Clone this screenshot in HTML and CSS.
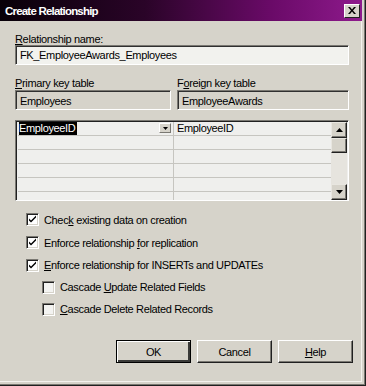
FILE: index.html
```html
<!DOCTYPE html>
<html lang="en">

<head>
    <meta charset="UTF-8">
    <title>Create Relationship</title>
    <link rel="stylesheet" href="styles.css">
</head>

<body>
    <div class="window">
        <div class="titlebar">
            <span class="title">Create Relationship</span>
            <span class="close-btn">
                <svg width="8" height="7" viewBox="0 0 8 7"><path d="M0 0h2l2 2.5 2-2.5h2L5 3.5 8 7H6L4 4.5 2 7H0l3-3.5z" fill="#000"/></svg>
            </span>
        </div>

        <div class="content">
            <label class="field-label"><u>R</u>elationship name:</label>
            <div class="textbox name-box">FK_EmployeeAwards_Employees</div>

            <div class="key-tables">
                <div class="key-col left-col">
                    <label class="field-label"><u>P</u>rimary key table</label>
                    <div class="textbox readonly">Employees</div>
                </div>
                <div class="key-col right-col">
                    <label class="field-label">F<u>o</u>reign key table</label>
                    <div class="textbox readonly">EmployeeAwards</div>
                </div>
            </div>

            <div class="grid">
                <div class="grid-rows">
                    <div class="grid-row">
                        <div class="cell cell-left"><span class="selected">EmployeeID</span><span class="drop-btn"><svg width="5" height="3" viewBox="0 0 5 3"><path d="M0 0h5L2.5 3z" fill="#000"/></svg></span></div>
                        <div class="cell">EmployeeID</div>
                    </div>
                    <div class="grid-row"><div class="cell cell-left"></div><div class="cell"></div></div>
                    <div class="grid-row"><div class="cell cell-left"></div><div class="cell"></div></div>
                    <div class="grid-row"><div class="cell cell-left"></div><div class="cell"></div></div>
                    <div class="grid-row"><div class="cell cell-left"></div><div class="cell"></div></div>
                    <div class="grid-row"><div class="cell cell-left"></div><div class="cell"></div></div>
                </div>
                <div class="scrollbar">
                    <span class="sb-btn"><svg width="7" height="4" viewBox="0 0 7 4"><path d="M3.5 0L7 4H0z" fill="#000"/></svg></span>
                    <span class="sb-btn sb-thumb"></span>
                    <span class="sb-track"></span>
                    <span class="sb-btn"><svg width="7" height="4" viewBox="0 0 7 4"><path d="M0 0h7L3.5 4z" fill="#000"/></svg></span>
                </div>
            </div>

            <div class="options">
                <div class="option">
                    <span class="checkbox"><svg width="9" height="9" viewBox="0 0 9 9"><path d="M1 3.5l2 2 5-5v2l-5 5-2-2z" fill="#000"/></svg></span>
                    <span>Chec<u>k</u> existing data on creation</span>
                </div>
                <div class="option">
                    <span class="checkbox"><svg width="9" height="9" viewBox="0 0 9 9"><path d="M1 3.5l2 2 5-5v2l-5 5-2-2z" fill="#000"/></svg></span>
                    <span>Enforce relationship <u>f</u>or replication</span>
                </div>
                <div class="option">
                    <span class="checkbox"><svg width="9" height="9" viewBox="0 0 9 9"><path d="M1 3.5l2 2 5-5v2l-5 5-2-2z" fill="#000"/></svg></span>
                    <span><u>E</u>nforce relationship for INSERTs and UPDATEs</span>
                </div>
                <div class="option sub-option">
                    <span class="checkbox empty"></span>
                    <span>Cascade <u>U</u>pdate Related Fields</span>
                </div>
                <div class="option sub-option">
                    <span class="checkbox empty"></span>
                    <span><u>C</u>ascade Delete Related Records</span>
                </div>
            </div>

            <div class="buttons">
                <button class="btn default">OK</button>
                <button class="btn">Cancel</button>
                <button class="btn"><u>H</u>elp</button>
            </div>
        </div>
    </div>
</body>

</html>
```

FILE: styles.css
```css
body {
    margin: 0;
    font-family: "Liberation Sans", Arial, sans-serif;
    font-size: 11px;
    letter-spacing: -0.35px;
    color: #000;
    background: #d6d3ca;
}

.window {
    width: 366px;
    height: 386px;
    box-sizing: border-box;
    background: #d6d3ca;
    border-right: 1px solid #202020;
    border-bottom: 1px solid #202020;
    box-shadow: inset -1px -1px 0 #7a7872, inset -3px -3px 0 #d6d3ca, inset -4px -4px 0 #f4f2ee;
    display: flex;
    flex-direction: column;
}

.titlebar {
    height: 21px;
    width: 362px;
    display: flex;
    align-items: center;
    justify-content: space-between;
    background: linear-gradient(to right, #080008 0%, #2a0428 40%, #6a0a68 75%, #8e1a8c 100%);
    padding: 0 2px 0 5px;
    box-sizing: border-box;
}

.title {
    color: #fff;
    font-weight: bold;
    font-size: 11.5px;
    letter-spacing: -0.8px;
}

.close-btn {
    width: 16px;
    height: 14px;
    box-sizing: border-box;
    background: #d6d3ca;
    border: 1px solid;
    border-color: #fff #202020 #202020 #fff;
    display: flex;
    align-items: center;
    justify-content: center;
}

.content {
    padding: 12px 0 0 15px;
    width: 349px;
    box-sizing: content-box;
}

.field-label {
    display: block;
    line-height: 12px;
    height: 12px;
}

.textbox {
    height: 20px;
    box-sizing: border-box;
    border: 1px solid;
    border-color: #7a7872 #fff #fff #7a7872;
    box-shadow: inset 1px 1px 0 #303030;
    padding: 3px 0 0 4px;
    line-height: 13px;
}

.name-box {
    width: 334px;
    background: #f2f2ee;
}

.key-tables {
    display: flex;
    gap: 6px;
    margin-top: 12px;
}

.key-tables .field-label {
    margin-bottom: 1px;
}

.left-col {
    width: 156px;
}

.right-col {
    width: 172px;
}

.readonly {
    background: #d6d3ca;
    padding-top: 4px;
}

.grid {
    margin-top: 10px;
    width: 334px;
    height: 81px;
    box-sizing: border-box;
    border: 1px solid;
    border-color: #7a7872 #fff #fff #7a7872;
    box-shadow: inset 1px 1px 0 #202020;
    background: #efefed;
    display: flex;
    overflow: hidden;
    padding: 1px 1px 0 1px;
}

.grid-rows {
    flex: 1;
    padding-left: 1px;
}

.grid-row {
    display: flex;
    height: 14px;
    box-sizing: border-box;
    border-bottom: 1px solid #c6c5c0;
}

.cell {
    flex: 1;
    line-height: 13px;
    padding-left: 3px;
}

.cell-left {
    flex: 0 0 156px;
    box-sizing: border-box;
    border-right: 1px solid #c6c5c0;
    display: flex;
    justify-content: space-between;
    padding-left: 1px;
}

.selected {
    background: #000;
    color: #fff;
    padding-right: 2px;
}

.drop-btn {
    width: 12px;
    height: 10px;
    margin: 1px 2px 0 0;
    box-sizing: border-box;
    background: #d6d3ca;
    border: 1px solid;
    border-color: #fff #7a7872 #7a7872 #fff;
    display: flex;
    align-items: center;
    justify-content: center;
}

.scrollbar {
    width: 16px;
    display: flex;
    flex-direction: column;
}

.sb-btn {
    height: 16px;
    box-sizing: border-box;
    background: #d6d3ca;
    border: 1px solid;
    border-color: #e8e6e0 #202020 #202020 #e8e6e0;
    box-shadow: inset -1px -1px 0 #7a7872;
    display: flex;
    align-items: center;
    justify-content: center;
}

.sb-thumb {
    height: 15px;
}

.sb-track {
    flex: 1;
    background: #e6e4de;
}

.options {
    margin-top: 7px;
    padding-left: 11px;
}

.option {
    display: flex;
    align-items: center;
    gap: 5px;
    height: 23px;
}

.option:nth-child(n+3) {
    height: 22px;
}

.sub-option {
    padding-left: 16px;
}

.checkbox {
    width: 13px;
    height: 13px;
    box-sizing: border-box;
    border: 1px solid;
    border-color: #7a7872 #fff #fff #7a7872;
    box-shadow: inset 1px 1px 0 #202020, inset -1px -1px 0 #d6d3ca;
    background: #fff;
    display: flex;
    align-items: center;
    justify-content: center;
}

.checkbox.empty {
    background: #f3f3f1;
}

.buttons {
    display: flex;
    justify-content: flex-end;
    gap: 6px;
    margin-top: 20px;
    width: 338px;
}

.btn {
    width: 75px;
    height: 23px;
    box-sizing: border-box;
    font-family: "Liberation Sans", Arial, sans-serif;
    font-size: 11px;
    letter-spacing: -0.35px;
    color: #000;
    background: #d6d3ca;
    border: 1px solid;
    border-color: #fff #202020 #202020 #fff;
    box-shadow: inset -1px -1px 0 #7a7872;
    padding: 0;
}

.btn.default {
    border: 1px solid #000;
    box-shadow: inset 1px 1px 0 #fff, inset -2px -2px 0 #3a3a38;
}
```
